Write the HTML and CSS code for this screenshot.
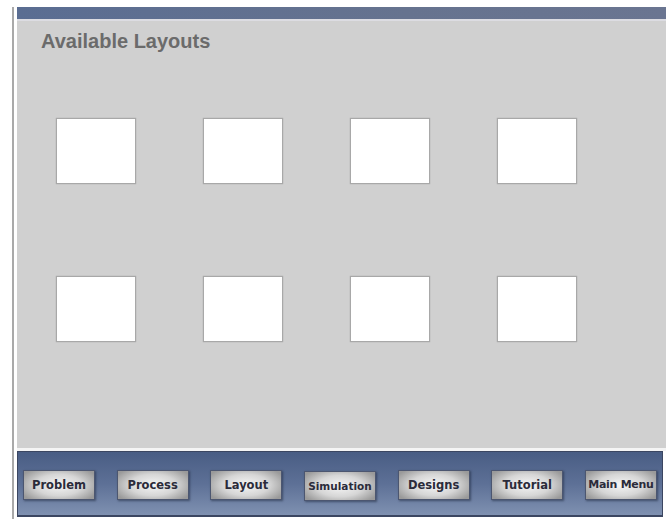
FILE: index.html
```html
<!DOCTYPE html>
<html lang="en">
<head>
<meta charset="utf-8">
<title>Available Layouts</title>
<link rel="stylesheet" href="styles.css">
</head>
<body>
<div class="frame">
  <div class="rule"></div>
  <div class="panel">
    <div class="topbar"></div>
    <div class="stage">
      <h1 class="title">Available Layouts</h1>
      <div class="layouts">
        <div class="slot"></div>
        <div class="slot"></div>
        <div class="slot"></div>
        <div class="slot"></div>
        <div class="slot"></div>
        <div class="slot"></div>
        <div class="slot"></div>
        <div class="slot"></div>
      </div>
    </div>
    <nav class="navbar">
      <button class="btn">Problem</button>
      <button class="btn">Process</button>
      <button class="btn">Layout</button>
      <button class="btn btn-small">Simulation</button>
      <button class="btn">Designs</button>
      <button class="btn">Tutorial</button>
      <button class="btn btn-tight">Main Menu</button>
    </nav>
  </div>
</div>
</body>
</html>
```

FILE: styles.css
```css
html, body {
  margin: 0;
  padding: 0;
  background: #ffffff;
}

.frame {
  display: flex;
  padding-top: 7px;
  height: 512px;
}

.rule {
  width: 2px;
  margin-left: 12px;
  margin-right: 3px;
  background: #a9a9a9;
}

.panel {
  flex: 1;
  display: flex;
  flex-direction: column;
}

.topbar {
  height: 12px;
  background: linear-gradient(to right, #5a6d92, #66738f 60%, #6a7591);
  border-bottom: 2px solid #dcdce2;
}

.stage {
  height: 430px;
  flex-shrink: 0;
  background: #d0d0d0;
  border-bottom: 3px solid #f4f4f4;
  padding: 9px 0 0 24px;
  box-sizing: border-box;
}

.title {
  margin: 0;
  font-family: "Liberation Sans", Arial, sans-serif;
  font-size: 20px;
  line-height: 23px;
  font-weight: bold;
  color: #6b6b6b;
}

.layouts {
  display: grid;
  grid-template-columns: repeat(4, 80px);
  grid-auto-rows: 66px;
  column-gap: 67px;
  row-gap: 92px;
  margin: 65px 0 0 15px;
}

.slot {
  background: #ffffff;
  border: 1px solid #a8a8a8;
  box-shadow: 0 0 1px rgba(0, 0, 0, 0.25);
}

.navbar {
  height: 63px;
  flex-shrink: 0;
  margin-right: 3px;
  display: flex;
  align-items: center;
  justify-content: space-between;
  padding: 0 5px 0 5px;
  background: linear-gradient(to bottom, #495d84, #5d7096 50%, #7f91b1);
  border: 1px solid #3b4661;
  border-bottom-width: 2px;
}

.btn {
  width: 72px;
  height: 30px;
  margin-top: 2px;
  padding: 0;
  white-space: nowrap;
  font-family: "DejaVu Sans", Verdana, sans-serif;
  font-weight: bold;
  font-size: 11.5px;
  color: #2b2b3a;
  background: radial-gradient(ellipse 60% 70% at 50% 50%, #f6f6f6, #d6d6d6 55%, #9a9a9a 100%);
  border: 1px solid #4c5670;
  box-shadow: 1px 1px 2px rgba(20, 30, 50, 0.5);
}

.btn-small {
  font-size: 10.5px;
  margin-top: 4px;
}

.btn-tight {
  font-size: 11px;
  letter-spacing: -0.3px;
}
```
